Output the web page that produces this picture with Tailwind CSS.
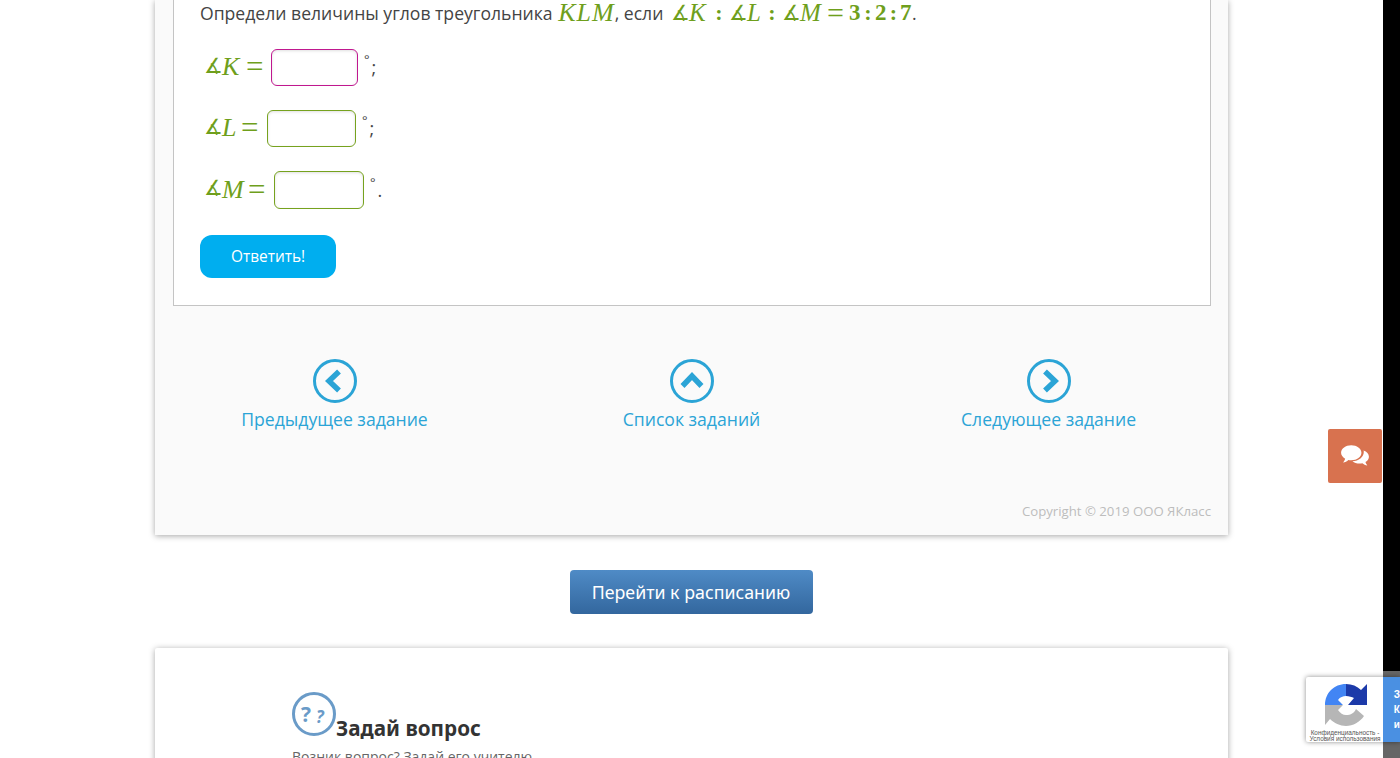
<!DOCTYPE html>
<html lang="ru">
<head>
<meta charset="utf-8">
<script src="https://cdn.jsdelivr.net/npm/@tailwindcss/browser@4"></script>
<title>Задание</title>
</head>
<body class="bg-white">
<div class="relative flex h-[758px] w-[1400px] overflow-hidden font-['Open_Sans',sans-serif] text-[#444]">
  <main class="w-[1383px] pl-[155px]">
    <!-- task card -->
    <section class="h-[535px] w-[1073px] bg-[#fafafa] shadow-[0_1px_6px_rgba(0,0,0,0.35)]">
      <div class="ml-[18px] h-[306px] w-[1038px] border border-t-0 border-[#c4c4c4] bg-white pl-[26px]">
        <p class="flex h-[26px] items-center whitespace-pre text-[17.6px]">Определи величины углов треугольника <span class="ml-[1px] font-['Liberation_Serif',serif] text-[26px] italic leading-[24px] tracking-[1px] text-[#6f9f1c]">KLM</span>, если <span class="ml-[3px] flex items-center font-['Liberation_Serif',serif] text-[25px] leading-[24px] text-[#6f9f1c]"><span class="w-[18px] font-['DejaVu_Sans',sans-serif] text-[21px]">∡</span><i class="w-[20px]">K</i><b class="w-[20px] text-center text-[22px]">:</b><span class="w-[18px] font-['DejaVu_Sans',sans-serif] text-[21px]">∡</span><i class="w-[15px]">L</i><b class="w-[20px] text-center text-[22px]">:</b><span class="w-[18px] font-['DejaVu_Sans',sans-serif] text-[21px]">∡</span><i class="w-[27px]">M</i><span class="w-[17px] text-[30px]">=</span><b class="ml-[5px] w-[12px] text-[23px]">3</b><b class="w-[14px] text-center text-[22px]">:</b><b class="w-[12px] text-[23px]">2</b><b class="w-[13px] text-center text-[22px]">:</b><b class="w-[12px] text-[23px]">7</b></span>.</p>

        <div class="mt-[23px] flex h-[37px] items-center">
          <span class="-mt-[2px] flex w-[67px] items-center pl-[4px] font-['Liberation_Serif',serif] text-[26px] text-[#6f9f1c]"><span class="w-[18px] font-['DejaVu_Sans',sans-serif] text-[21px]">∡</span><i class="w-[24px]">K</i><span class="text-[31px] leading-none">=</span></span>
          <input class="ml-[4px] h-[37px] w-[87px] rounded-[6px] border border-[#c0188f] bg-white shadow-[inset_0_1px_3px_rgba(0,0,0,0.12)]">
          <span class="ml-[6px] flex text-[18px]"><span class="-mt-[4px] mr-[2px] text-[13px]">°</span>;</span>
        </div>
        <div class="mt-[24px] flex h-[37px] items-center">
          <span class="-mt-[2px] flex w-[63px] items-center pl-[4px] font-['Liberation_Serif',serif] text-[26px] text-[#6f9f1c]"><span class="w-[18px] font-['DejaVu_Sans',sans-serif] text-[21px]">∡</span><i class="w-[19px]">L</i><span class="text-[31px] leading-none">=</span></span>
          <input class="ml-[4px] h-[37px] w-[89px] rounded-[6px] border border-[#76a21e] bg-white shadow-[inset_0_1px_3px_rgba(0,0,0,0.12)]">
          <span class="ml-[6px] flex text-[18px]"><span class="-mt-[4px] mr-[2px] text-[13px]">°</span>;</span>
        </div>
        <div class="mt-[24px] flex h-[38px] items-center">
          <span class="-mt-[2px] flex w-[70px] items-center pl-[4px] font-['Liberation_Serif',serif] text-[26px] text-[#6f9f1c]"><span class="w-[18px] font-['DejaVu_Sans',sans-serif] text-[21px]">∡</span><i class="w-[26px]">M</i><span class="text-[31px] leading-none">=</span></span>
          <input class="ml-[4px] h-[38px] w-[90px] rounded-[6px] border border-[#76a21e] bg-white shadow-[inset_0_1px_3px_rgba(0,0,0,0.12)]">
          <span class="ml-[6px] flex text-[18px]"><span class="-mt-[4px] mr-[2px] text-[13px]">°</span>.</span>
        </div>

        <button class="mt-[26px] h-[43px] w-[136px] rounded-[12px] bg-[#00aeef] text-[15.4px] text-white">Ответить!</button>
      </div>

      <!-- prev / list / next -->
      <nav class="ml-[1px] mt-[53px] grid w-[1071px] grid-cols-3 text-center text-[17.6px] text-[#2ba4d6]">
        <a class="flex flex-col items-center">
          <svg class="h-[44px] w-[44px]" viewBox="0 0 44 44" fill="none" stroke="#2ba4d6"><circle cx="22" cy="22" r="20.5" stroke-width="3"/><path d="M26 12.500 16 22l10 9.500" stroke-width="5.500"/></svg>
          <span class="mt-[3px]">Предыдущее задание</span>
        </a>
        <a class="flex flex-col items-center">
          <svg class="h-[44px] w-[44px]" viewBox="0 0 44 44" fill="none" stroke="#2ba4d6"><circle cx="22" cy="22" r="20.5" stroke-width="3"/><path d="M12.500 27 22 17l9.500 10" stroke-width="5.500"/></svg>
          <span class="mt-[3px]">Список заданий</span>
        </a>
        <a class="flex flex-col items-center">
          <svg class="h-[44px] w-[44px]" viewBox="0 0 44 44" fill="none" stroke="#2ba4d6"><circle cx="22" cy="22" r="20.5" stroke-width="3"/><path d="M18 12.500 28 22l-10 9.500" stroke-width="5.500"/></svg>
          <span class="mt-[3px]">Следующее задание</span>
        </a>
      </nav>
      <p class="mr-[17px] mt-[70px] text-right text-[13.2px] text-[#bdbdbd]">Copyright © 2019 ООО ЯКласс</p>
    </section>

    <div class="mt-[35px] flex w-[1073px] justify-center">
      <button class="ml-[-1px] h-[44px] w-[243px] rounded-[4px] bg-gradient-to-b from-[#4f8bc6] to-[#33679e] font-['Noto_Sans',sans-serif] text-[17.8px] text-white">Перейти к расписанию</button>
    </div>

    <!-- question card -->
    <section class="mt-[34px] h-[130px] w-[1073px] rounded-t-[2px] bg-white pl-[137px] pt-[44px] shadow-[0_1px_6px_rgba(0,0,0,0.35)]">
      <div class="flex items-start">
        <svg class="h-[44px] w-[44px] shrink-0" viewBox="0 0 44 44" fill="none"><circle cx="22" cy="22" r="20.500" stroke="#6a9bc8" stroke-width="3"/><text x="9" y="30" font-family="Open Sans" font-size="21" font-weight="700" fill="#6a9bc8">?</text><text x="24" y="31" font-family="Open Sans" font-size="17" font-weight="700" font-style="italic" fill="#6a9bc8">?</text></svg>
        <h2 class="mt-[21px] font-['Noto_Sans',sans-serif] text-[20.7px] font-bold leading-[30px] text-[#333]">Задай вопрос</h2>
      </div>
      <p class="mt-[4px] text-[14px] leading-[20px] text-[#666]">Возник вопрос? Задай его учителю.</p>
    </section>
  </main>
  <div class="w-[17px] bg-black"></div>

  <!-- feedback tab -->
  <button class="absolute left-[1328px] top-[429px] flex h-[54px] w-[54px] items-center justify-center rounded-[2px] bg-[#d8724f]">
    <svg class="h-[30px] w-[30px]" viewBox="0 0 28 28" fill="#fff"><path d="M20 11c0 4-4.200 7-9.500 7-1 0-1.800-.1-2.700-.3C6.500 19 4.800 19.800 2.800 20c.9-1 1.700-2.100 2-3.500C2.500 15.200 1 13.200 1 11c0-4 4.300-7 9.500-7S20 7 20 11Z"/><path d="M22 8.800c3 1.100 5 3.300 5 5.900 0 2-1.200 3.800-3.200 5 .2 1.200.9 2.200 1.700 3.100-1.800-.2-3.400-.9-4.600-2-.9.200-1.700.3-2.600.3-2.700 0-5.100-.9-6.700-2.300 5.900-.1 10.600-3.800 10.600-8.800 0-.4-.1-.8-.2-1.200Z"/></svg>
  </button>

  <!-- recaptcha -->
  <div class="absolute left-[1383px] top-[671px] h-[87px] w-[17px] bg-[#666]"></div>
  <div class="absolute left-[1306px] top-[677px] flex h-[65px] w-[94px] overflow-hidden rounded-l-[2px] bg-white shadow-[0_0_5px_rgba(0,0,0,0.45)]">
    <div class="relative w-[78px]">
      <svg class="absolute left-[18px] top-[6px] h-[44px] w-[44px]" viewBox="0 0 44 44">
        <path d="M22 1C28 1 33 3 37 7L43 1V22H24L30 15C28 14 25 13 22 13Z" fill="#1c3aa9"/>
        <path d="M22 1V13C19 13 16 14 14 17L19 22H1C1 10 10 1 22 1Z" fill="#4285f4"/>
        <path d="M1 22H19L14 27C16 30 19 32 22 32C27 32 30 30 32 26L40 33C36 39 29 43 22 43C16 43 10 40 6 36L1 42Z" fill="#b6b6b6"/>
      </svg>
      <p class="absolute left-0 top-[53px] w-[78px] text-center font-['Liberation_Sans',sans-serif] text-[6.400px] leading-[6px] text-[#555]">Конфиденциальность -<br>Условия использования</p>
    </div>
    <div class="flex flex-1 flex-col justify-center bg-[#4a90e2] pl-[11px] font-['Liberation_Sans',sans-serif] text-[10px] font-bold leading-[15px] text-white"><span>З</span><span>К</span><span>и</span></div>
  </div>
</div>
</body>
</html>
